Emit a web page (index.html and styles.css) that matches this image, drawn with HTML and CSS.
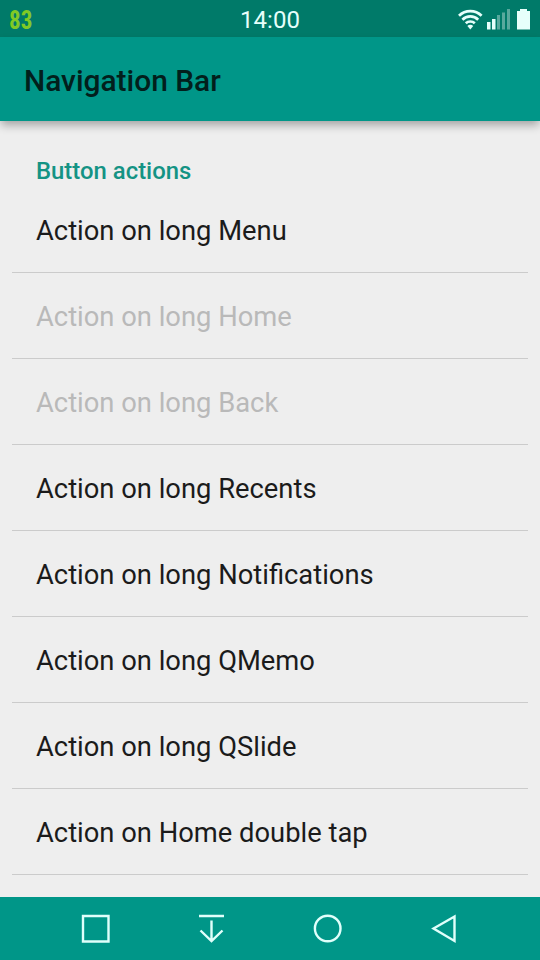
FILE: index.html
```html
<!DOCTYPE html>
<html lang="en">

<head>
    <meta charset="utf-8">
    <meta name="viewport" content="width=device-width, initial-scale=1.0">
    <title>Navigation Bar</title>
    <link rel="stylesheet" href="styles.css">
</head>

<body>
    <div class="status">
        <span class="battery-level">83</span>
        <span class="clock">14:00</span>
        <svg class="status-icons" width="74" height="24" viewBox="0 0 74 24">
            <!-- wifi -->
            <g fill="none" stroke="#e6fffb" stroke-width="2.7">
                <path d="M2 7.800a16 16 0 0 1 22.600 0"/>
                <path d="M5.400 11.800a11 11 0 0 1 15.800 0"/>
                <path d="M8.800 15.300a6.500 6.500 0 0 1 9 0"/>
            </g>
            <path fill="#e6fffb" d="M10.400 18a4 4 0 0 1 5.800 0L13.300 21.500z"/>
            <!-- signal -->
            <path fill="#e6fffb" d="M30 14h3.500v7.500H30zM35 11h3.500v10.500H35z"/>
            <path fill="#58a99d" d="M40 7h3v14.500h-3zM45 4.500h3v17h-3zM50 1h3v20.500h-3z"/>
            <!-- battery -->
            <path fill="#e6fffb" d="M63 1h7v2h3v18.500H60V3h3z"/>
        </svg>
    </div>

    <header>
        <h1>Navigation Bar</h1>
    </header>

    <main>
        <h2>Button actions</h2>
        <ul class="actions">
            <li>Action on long Menu</li>
            <li class="disabled">Action on long Home</li>
            <li class="disabled">Action on long Back</li>
            <li>Action on long Recents</li>
            <li>Action on long Notifications</li>
            <li>Action on long QMemo</li>
            <li>Action on long QSlide</li>
            <li>Action on Home double tap</li>
        </ul>
    </main>

    <nav class="keys">
        <svg width="32" height="32" viewBox="0 0 32 32"><path d="M3 3h25.500v25.500H3z"/></svg>
        <svg width="32" height="32" viewBox="0 0 32 32"><path d="M3 3h25M15.500 7.500v20M4.500 17.500l11 10.500 11-10.500"/></svg>
        <svg width="32" height="32" viewBox="0 0 32 32"><circle cx="15.700" cy="15.500" r="12.800"/></svg>
        <svg width="32" height="32" viewBox="0 0 32 32"><path d="M5.500 15.500l21-12v24.500z"/></svg>
    </nav>
</body>

</html>
```

FILE: styles.css
```css
body {
    margin: 0;
    height: 960px;
    display: flex;
    flex-direction: column;
    overflow: hidden;
    background-color: #eee;
    font-family: Roboto, sans-serif;
    color: #1b1b1b;
}

.status {
    height: 37px;
    flex: none;
    display: grid;
    grid-template-columns: 1fr auto 1fr;
    align-items: center;
    padding: 0 9px;
    background-color: #007a69;
}

.battery-level {
    font-family: "Roboto Condensed", Roboto, sans-serif;
    font-size: 26px;
    font-weight: bold;
    line-height: 37px;
    padding-top: 1px;
    color: #80c926;
    transform: scaleX(0.89);
    transform-origin: left;
}

.clock {
    font-size: 24px;
    line-height: 37px;
    padding-top: 2px;
    color: #e6fffb;
}

.status-icons {
    justify-self: end;
    margin-top: 1px;
}

header {
    height: 84px;
    flex: none;
    display: flex;
    align-items: center;
    padding: 0 24px;
    background-color: #009688;
    box-shadow: 0 5px 9px -1px rgba(0, 0, 0, 0.32);
}

h1 {
    margin: 0;
    padding-top: 3px;
    font-size: 29.9px;
    font-weight: 500;
    color: #021f1c;
}

main {
    flex: 1;
    padding: 30px 12px 0;
}

h2 {
    margin: 0;
    padding: 0 24px;
    height: 36px;
    font-size: 23.9px;
    font-weight: 500;
    line-height: 41px;
    color: #149384;
}

.actions {
    margin: 0;
    padding: 0;
    list-style: none;
}

.actions li {
    box-sizing: border-box;
    height: 86px;
    padding: 0 24px;
    border-bottom: 1px solid #cbcbcb;
    font-size: 27.35px;
    line-height: 89px;
}

.actions .disabled {
    color: #b9b9b9;
}

.keys {
    height: 63px;
    flex: none;
    display: grid;
    grid-template-columns: repeat(4, 1fr);
    place-items: center;
    box-sizing: border-box;
    padding: 0 38px;
    background-color: #009688;
}

.keys svg {
    fill: none;
    stroke: #e0fffb;
    stroke-width: 2.4;
}
```
